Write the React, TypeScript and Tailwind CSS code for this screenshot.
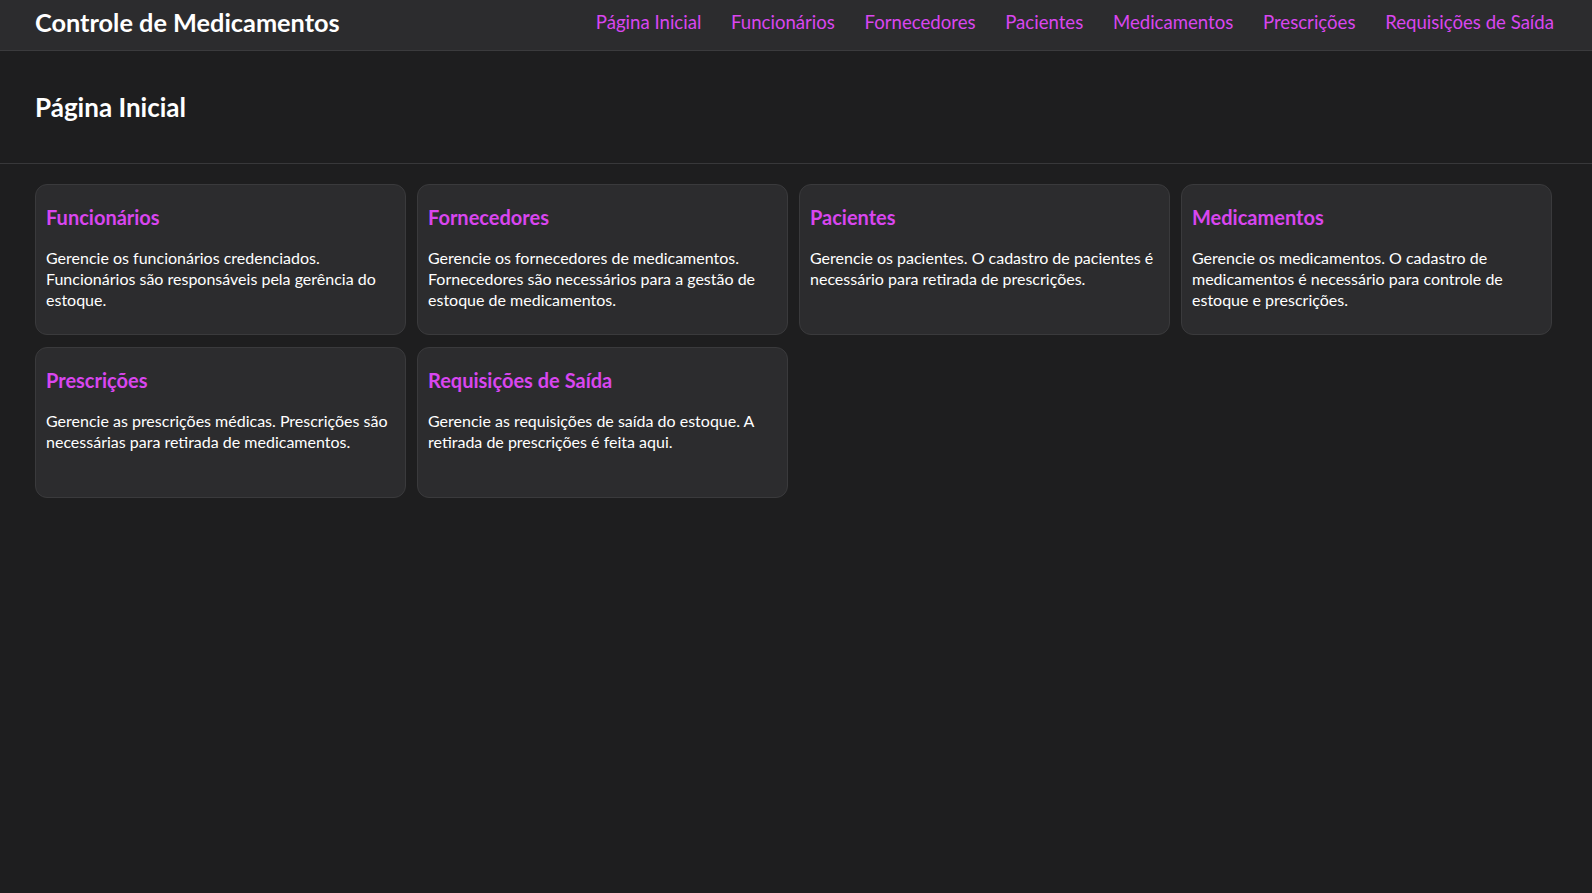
const links = [
  "Página Inicial",
  "Funcionários",
  "Fornecedores",
  "Pacientes",
  "Medicamentos",
  "Prescrições",
  "Requisições de Saída",
];

const cards = [
  {
    title: "Funcionários",
    text: "Gerencie os funcionários credenciados. Funcionários são responsáveis pela gerência do estoque.",
  },
  {
    title: "Fornecedores",
    text: "Gerencie os fornecedores de medicamentos. Fornecedores são necessários para a gestão de estoque de medicamentos.",
  },
  {
    title: "Pacientes",
    text: "Gerencie os pacientes. O cadastro de pacientes é necessário para retirada de prescrições.",
  },
  {
    title: "Medicamentos",
    text: "Gerencie os medicamentos. O cadastro de medicamentos é necessário para controle de estoque e prescrições.",
  },
  {
    title: "Prescrições",
    text: "Gerencie as prescrições médicas. Prescrições são necessárias para retirada de medicamentos.",
  },
  {
    title: "Requisições de Saída",
    text: "Gerencie as requisições de saída do estoque. A retirada de prescrições é feita aqui.",
  },
];

export default function App() {
  return (
    <div className="min-h-screen bg-[#1e1e1f] text-white font-['Lato',sans-serif]">
      <nav className="h-[51px] flex items-center justify-between pl-[35px] pr-[38px] pb-[4px] bg-[#2c2c2e] border-b border-[#3b3b3d]">
        <h1 className="text-[25.3px] font-bold leading-none">Controle de Medicamentos</h1>
        <ul className="flex items-center gap-[29.7px]">
          {links.map((l) => (
            <li key={l}>
              <a href="#" className="text-[18.6px] text-[#d946ef] leading-none">
                {l}
              </a>
            </li>
          ))}
        </ul>
      </nav>
      <header className="h-[113px] flex items-center px-[35px] border-b border-[#38383a]">
        <h2 className="text-[26px] font-bold leading-none">Página Inicial</h2>
      </header>
      <main className="grid grid-cols-4 gap-x-[11px] gap-y-[12px] pt-[20px] pl-[35px] pr-[40px]">
        {cards.map((c) => (
          <div
            key={c.title}
            className="h-[151px] rounded-[12px] bg-[#2c2c2e] border border-[#3a3a3c] px-[10px] pt-[20px]"
          >
            <h3 className="text-[20px] font-bold text-[#d946ef] leading-[24px]">{c.title}</h3>
            <p className="mt-[18px] text-[16px] leading-[21px]">{c.text}</p>
          </div>
        ))}
      </main>
    </div>
  );
}
